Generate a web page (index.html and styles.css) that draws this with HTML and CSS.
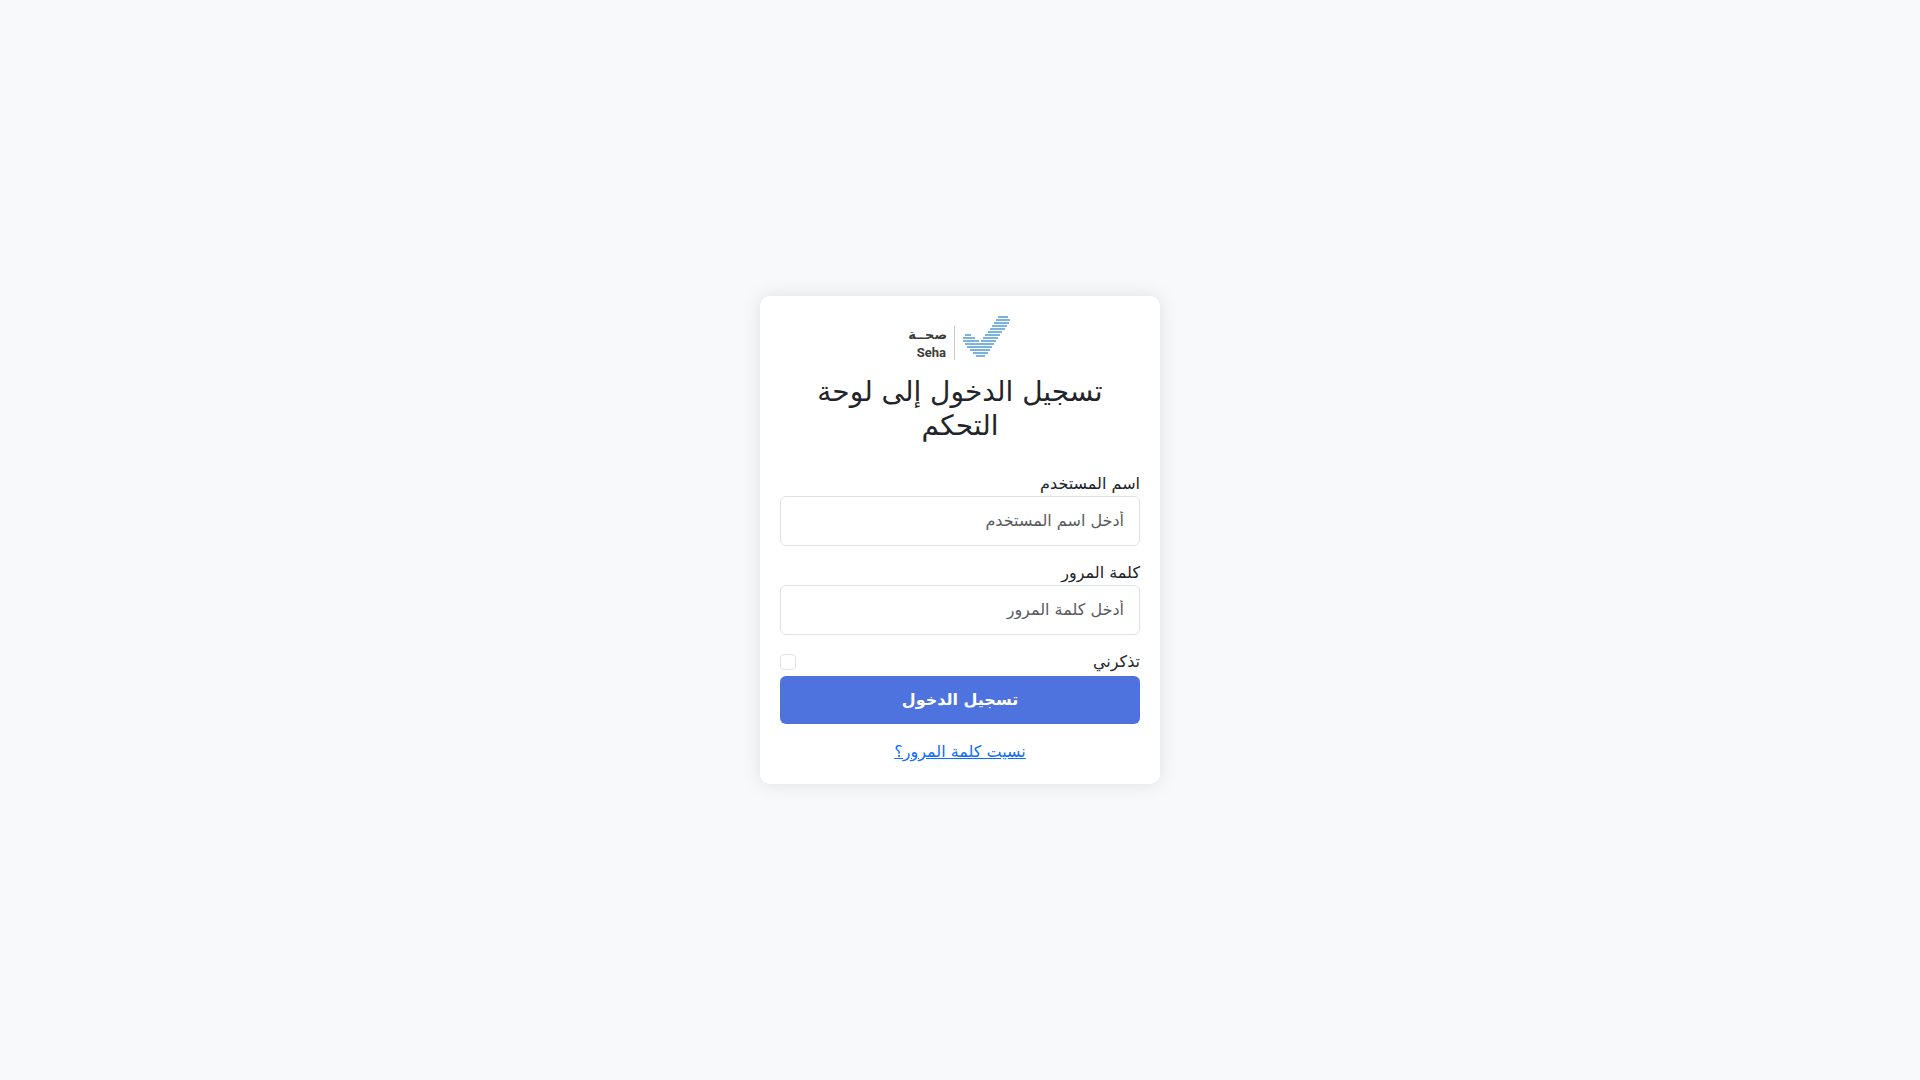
FILE: index.html
```html
<!DOCTYPE html>
<html lang="ar" dir="rtl">
<head>
    <meta charset="UTF-8">
    <meta name="viewport" content="width=device-width, initial-scale=1.0">
    <title>تسجيل الدخول</title>
    <link rel="stylesheet" href="styles.css">
</head>
<body>

    <main class="login-container">
        <svg class="logo" viewBox="0 0 100 44" role="img" aria-label="صحة Seha">
            <g class="logo-text" direction="ltr">
                <text class="logo-ar" x="37" y="23" text-anchor="end">صحــة</text>
                <text class="logo-en" x="36" y="41" text-anchor="end">Seha</text>
            </g>
            <path d="M44.5 10V44" stroke="#c8c8c8"/>
            <path stroke="#7ab4dc" stroke-width="2" d="M88 1H98M86 4H100M84 7H99M82 10H97M80 13H95M78 16H92M75 19H90M73 22H88M71 25H86M55 19H61M53 22H65M53 25H69M55 28H84M57 31H82M60 34H80M63 37H78M66 40H75"/>
        </svg>
        <h2>تسجيل الدخول إلى لوحة التحكم</h2>
        <form>
            <div class="form-group">
                <label for="username">اسم المستخدم</label>
                <input type="text" class="form-control" id="username" placeholder="أدخل اسم المستخدم">
            </div>
            <div class="form-group">
                <label for="password">كلمة المرور</label>
                <input type="password" class="form-control" id="password" placeholder="أدخل كلمة المرور">
            </div>
            <div class="remember">
                <label for="remember">تذكرني</label>
                <input type="checkbox" id="remember">
            </div>
            <button type="submit" class="btn-login">تسجيل الدخول</button>
        </form>
        <a href="#" class="forgot">نسيت كلمة المرور؟</a>
    </main>

</body>
</html>
```
FILE: styles.css
```css
* {
    box-sizing: border-box;
}
body {
    margin: 0;
    min-height: 100vh;
    display: flex;
    align-items: center;
    justify-content: center;
    font-family: "DejaVu Sans", sans-serif;
    font-size: 16px;
    line-height: 24px;
    color: #212529;
    background-color: #f8f9fb;
}
.login-container {
    width: 100%;
    max-width: 400px;
    padding: 20px;
    background: white;
    border-radius: 10px;
    box-shadow: 0 0 20px rgba(0, 0, 0, 0.1);
    text-align: center;
}
.logo {
    display: block;
    width: 100px;
    margin: 0 auto 15px;
    overflow: visible;
}
.logo-text {
    fill: #3c3c3b;
    font-weight: bold;
}
.logo-ar {
    font-family: "DejaVu Sans", sans-serif;
    font-size: 13px;
}
.logo-en {
    font-family: Roboto, sans-serif;
    font-size: 13px;
}
h2 {
    margin: 0 0 29px;
    font-size: 28px;
    font-weight: 500;
    line-height: 34px;
}
.form-group {
    margin-bottom: 15px;
    text-align: right;
}
.form-group label {
    display: block;
}
.form-control {
    display: block;
    width: 100%;
    height: 50px;
    padding: 11px 15px 13px;
    font: inherit;
    color: #212529;
    background: white;
    border: 1px solid #dee2e6;
    border-radius: 6px;
}
.form-control::placeholder {
    color: #595c5f;
    opacity: 1;
}
.remember {
    display: flex;
    justify-content: space-between;
    align-items: center;
    margin-bottom: 2px;
}
.remember input {
    appearance: none;
    width: 16px;
    height: 16px;
    margin: 0;
    background: white;
    border: 1px solid #dee2e6;
    border-radius: 4px;
}
.remember input:checked {
    background: #4e73df;
}
.btn-login {
    display: block;
    width: 100%;
    padding: 12px;
    margin-bottom: 16px;
    font: inherit;
    font-weight: bold;
    color: white;
    background: #4e73df;
    border: none;
    border-radius: 6px;
    cursor: pointer;
}
.btn-login:hover {
    background: #2e59d9;
}
.forgot {
    display: inline-block;
    vertical-align: top;
    color: #0d6efd;
}
```
